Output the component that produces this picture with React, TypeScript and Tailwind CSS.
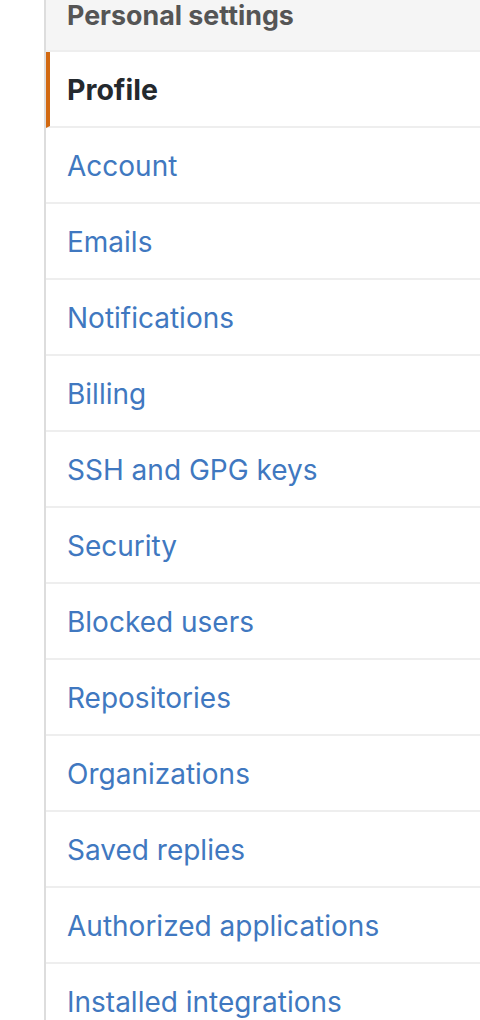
import React from "react";

const items = [
  "Account",
  "Emails",
  "Notifications",
  "Billing",
  "SSH and GPG keys",
  "Security",
  "Blocked users",
  "Repositories",
  "Organizations",
  "Saved replies",
  "Authorized applications",
  "Installed integrations",
];

export default function App() {
  return (
    <div
      className="w-[480px] h-[1020px] overflow-hidden bg-white"
      style={{ fontFamily: "Inter, 'Liberation Sans', sans-serif" }}
    >
      <div className="ml-[44px] border-l-2 border-[#dddddd]">
        <div className="h-[50px] bg-[#f5f5f5] border-b-2 border-[#eeeeee] box-content pl-[21px] flex items-start">
          <div className="mt-[-3px] text-[26.8px] font-bold text-[#555555] leading-[36px] whitespace-nowrap">
            Personal settings
          </div>
        </div>
        <div className="h-[74px] border-b-2 border-[#eeeeee] box-content flex items-center border-l-4 border-l-[#d26911] pl-[17px]">
          <span className="text-[28.5px] font-bold text-[#24292e] pt-[3px]">Profile</span>
        </div>
        {items.map((t) => (
          <div
            key={t}
            className="h-[74px] border-b-2 border-[#eeeeee] box-content flex items-center pl-[21px]"
          >
            <span className="text-[28px] text-[#4078c0] pt-[1px]">{t}</span>
          </div>
        ))}
      </div>
    </div>
  );
}
